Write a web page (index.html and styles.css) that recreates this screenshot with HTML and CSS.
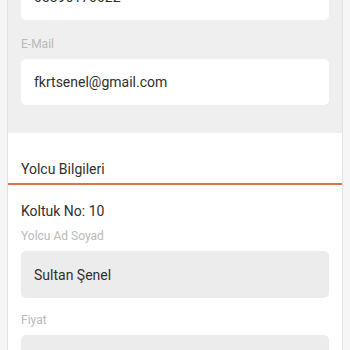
FILE: index.html
```html
<!DOCTYPE html>
<html lang="tr">
<head>
<meta charset="utf-8">
<link rel="stylesheet" href="styles.css">
</head>
<body>
<div class="card">
  <section class="contact">
    <div class="field field-first">05396170022</div>
    <div class="label">E-Mail</div>
    <div class="field">fkrtsenel@gmail.com</div>
  </section>
  <section class="passenger">
    <h2 class="title">Yolcu Bilgileri</h2>
    <div class="body">
      <div class="seat">Koltuk No: 10</div>
      <div class="label">Yolcu Ad Soyad</div>
      <div class="field field-gray">Sultan Şenel</div>
      <div class="label label-gap">Fiyat</div>
      <div class="field field-gray"></div>
    </div>
  </section>
</div>
</body>
</html>
```

FILE: styles.css
```css
html, body {
  margin: 0;
  padding: 0;
  background: #f6f6f6;
  font-family: Roboto, "Liberation Sans", sans-serif;
  overflow: hidden;
  height: 350px;
}
.card {
  margin: 0 7px;
  border-left: 1px solid #e3e3e3;
  border-right: 1px solid #e3e3e3;
  background: #ffffff;
  height: 400px;
}
.contact {
  background: #efefef;
  padding: 0 13px 28px 13px;
  display: flex;
  flex-direction: column;
}
.field {
  background: #ffffff;
  border-radius: 5px;
  height: 46px;
  box-sizing: border-box;
  padding: 0 13px;
  display: flex;
  align-items: center;
  font-size: 14px;
  color: #303030;
}
.field-first {
  margin-top: -26px;
}
.contact .label {
  margin-top: 16px;
}
.label {
  font-size: 12px;
  line-height: 16px;
  color: #bababa;
  margin-bottom: 7px;
}
.passenger .title {
  margin: 0;
  font-weight: normal;
  font-size: 14px;
  line-height: 20px;
  color: #303030;
  padding: 26px 13px 4px 13px;
  border-bottom: 2px solid #e2704a;
}
.body {
  padding: 16px 13px 0 13px;
  display: flex;
  flex-direction: column;
}
.seat {
  font-size: 14px;
  line-height: 20px;
  color: #303030;
  margin-bottom: 7px;
}
.field-gray {
  background: #ececec;
  height: 47px;
}
.label-gap {
  margin-top: 14px;
}
```
